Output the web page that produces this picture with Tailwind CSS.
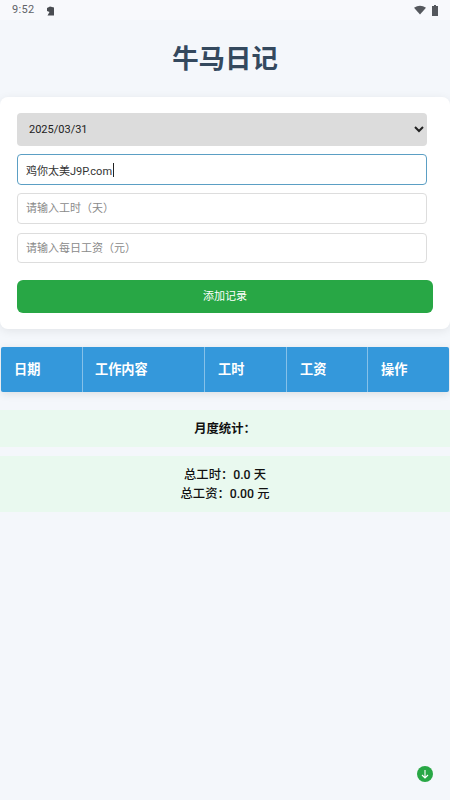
<html>
<head>
    <meta charset="utf-8">
    <script src="https://cdn.jsdelivr.net/npm/@tailwindcss/browser@4"></script>
</head>
<body class="bg-[#f4f7fb] font-['Roboto','Noto_Sans_CJK_SC',sans-serif] overflow-hidden">
    <div class="w-[450px] h-[800px] relative">
        <!-- status bar -->
        <div class="h-[20px] px-[12px] flex items-center justify-between bg-[#f8f9fc]">
            <div class="flex items-center gap-[12px]">
                <span class="text-[11px] leading-[20px] text-[#5f6368] tracking-[0.3px]">9:52</span>
                <svg width="9" height="10" viewBox="0 0 9 10" class="mt-[1px]"><path d="M1 2 L4 0.5 L8 1.5 L8 9.5 L1.5 9.5 L3.5 6 L1 5 Z" fill="#4a4d52"/></svg>
            </div>
            <div class="flex items-center gap-[6px]">
                <svg width="12" height="10" viewBox="0 0 13 10"><path d="M0 2.5 Q6.5 -1.5 13 2.5 L6.5 10 Z" fill="#55585d"/></svg>
                <svg width="6" height="11" viewBox="0 0 6 11"><path d="M2 0 H4 V1 H6 V11 H0 V1 H2 Z" fill="#55585d"/></svg>
            </div>
        </div>

        <h1 class="h-[77px] pt-[19px] text-center text-[26.4px] leading-[40px] font-bold text-[#34495e]">牛马日记</h1>

        <!-- form card -->
        <div class="h-[232px] bg-white rounded-[8px] shadow-[0_2px_10px_rgba(0,0,0,0.08)] pt-[16px] pl-[17px] pr-[17px]">
            <select class="block w-[410px] h-[33px] bg-[#dcdcdc] rounded-[4px] pl-[8px] pr-[2px] text-[11px] text-[#222]">
                <option>2025/03/31</option>
            </select>
            <div class="relative mt-[8px]">
                <input class="block w-[410px] h-[31px] bg-white border border-[#5b9fc4] rounded-[4px] px-[8px] text-[11px] text-[#333] outline-none" value="鸡你太美J9P.com">
                <!-- text caret -->
                <span class="absolute left-[96px] top-[9px] w-[1px] h-[14px] bg-[#222]"></span>
            </div>
            <input class="block mt-[8px] w-[410px] h-[31px] bg-white border border-[#ddd] rounded-[4px] px-[8px] text-[11px] placeholder:text-[#8a8a8a]" placeholder="请输入工时（天）">
            <input class="block mt-[9px] w-[410px] h-[30px] bg-white border border-[#ddd] rounded-[4px] px-[8px] text-[11px] placeholder:text-[#8a8a8a]" placeholder="请输入每日工资（元）">
            <button class="block mt-[17px] w-[416px] h-[33px] pt-[1px] bg-[#28a745] rounded-[6px] text-white text-[11px]">添加记录</button>
        </div>

        <!-- table header -->
        <div class="mt-[18px] mx-[1px] h-[45px] grid grid-cols-[82px_122px_82px_81px_81px] bg-[#3498db] rounded-[2px] shadow-[0_2px_8px_rgba(0,0,0,0.1)] text-white text-[13.2px] font-semibold">
            <div class="flex items-center pl-[13px] border-r border-[#85c1e9]">日期</div>
            <div class="flex items-center pl-[12px] border-r border-[#85c1e9]">工作内容</div>
            <div class="flex items-center pl-[13px] border-r border-[#85c1e9]">工时</div>
            <div class="flex items-center pl-[13px] border-r border-[#85c1e9]">工资</div>
            <div class="flex items-center pl-[13px]">操作</div>
        </div>

        <!-- stats -->
        <div class="mt-[18px] h-[37px] pt-[2px] bg-[#e9f9ef] flex items-center justify-center text-[12.3px] font-semibold text-[#111]">月度统计：</div>
        <div class="mt-[9px] h-[56px] pt-[2px] bg-[#e9f9ef] flex flex-col items-center justify-center text-[12.3px] leading-[19px] font-medium text-[#111]">
            <div>总工时：0.0 天</div>
            <div>总工资：0.00 元</div>
        </div>

        <!-- floating download badge -->
        <div class="absolute left-[417px] top-[766px] w-[16px] h-[16px] rounded-full bg-[#28a745] flex items-center justify-center">
            <svg width="10" height="10" viewBox="0 0 10 10" fill="none" stroke="white" stroke-width="1.1"><path d="M5 1 V9 M2 6 L5 9 L8 6"/></svg>
        </div>
    </div>
</body>
</html>
